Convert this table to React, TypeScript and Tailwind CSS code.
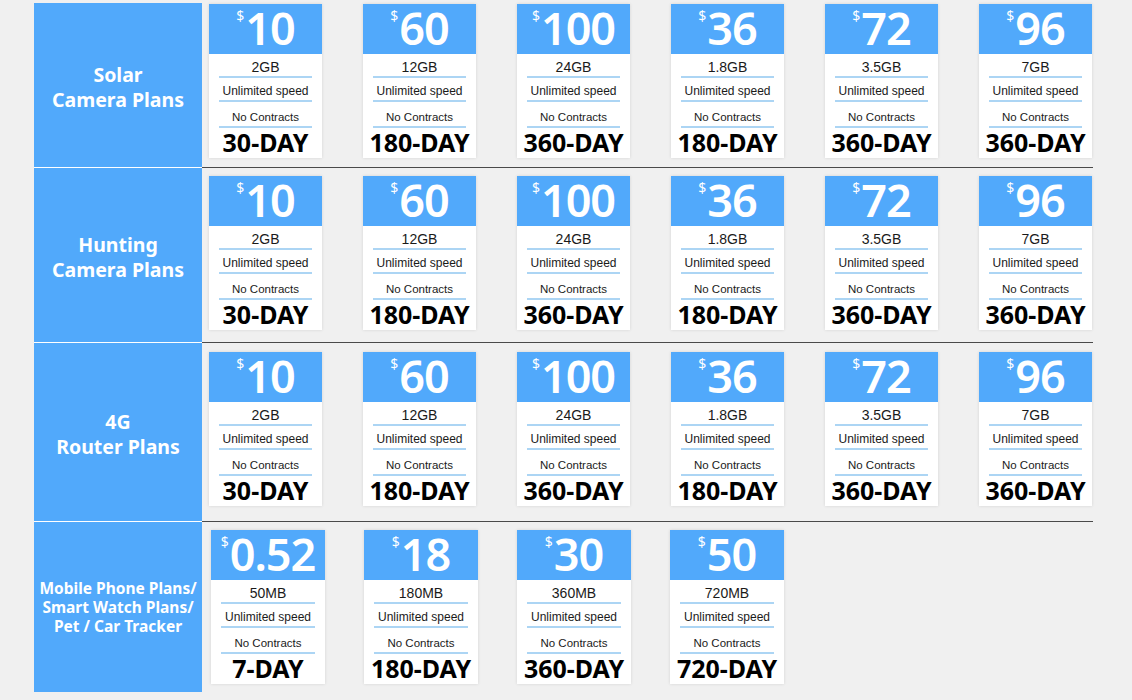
import React from "react";

type Plan = { price: string; data: string; days: string };

const std: Plan[] = [
  { price: "10", data: "2GB", days: "30-DAY" },
  { price: "60", data: "12GB", days: "180-DAY" },
  { price: "100", data: "24GB", days: "360-DAY" },
  { price: "36", data: "1.8GB", days: "180-DAY" },
  { price: "72", data: "3.5GB", days: "360-DAY" },
  { price: "96", data: "7GB", days: "360-DAY" },
];

const mobile: Plan[] = [
  { price: "0.52", data: "50MB", days: "7-DAY" },
  { price: "18", data: "180MB", days: "180-DAY" },
  { price: "30", data: "360MB", days: "360-DAY" },
  { price: "50", data: "720MB", days: "720-DAY" },
];

const small = { fontFamily: '"Liberation Sans", Arial, sans-serif' };
const noto = { fontFamily: '"Noto Sans", "Open Sans", sans-serif' };

const Card = ({ plan, wide }: { plan: Plan; wide?: boolean }) => {
  return (
    <div
      className={`${wide ? "w-[114px]" : "w-[113px]"} shrink-0 bg-white shadow-[0_0_3px_rgba(0,0,0,0.12)]`}
    >
      <div className="h-[50px] bg-[#51a9fb] flex justify-center items-start text-white" style={noto}>
        <span className="text-[14px] leading-[16px] mt-[4px] mr-[1px]">$</span>
        <span className="text-[45px] leading-[47px] font-semibold tracking-[-1px]">{plan.price}</span>
      </div>
      <div className="h-[22px] flex items-end justify-center text-[14px] leading-[18px] text-[#1a1a1a]" style={small}>
        {plan.data}
      </div>
      <div className="mx-[10px] border-b-2 border-[#acd5f4]" />
      <div className="h-[22px] flex items-end justify-center text-[12px] leading-[18px] text-[#1a1a1a]" style={small}>
        Unlimited speed
      </div>
      <div className="mx-[10px] border-b-2 border-[#acd5f4]" />
      <div className="h-[24px] flex items-end justify-center text-[11.5px] leading-[18px] text-[#1a1a1a]" style={small}>
        No Contracts
      </div>
      <div className="mx-[10px] border-b-2 border-[#acd5f4]" />
      <div className="h-[30px] flex items-start justify-center text-[25px] leading-[28px] font-bold text-black" style={noto}>
        {plan.days}
      </div>
    </div>
  );
};

const Row = ({
  label,
  plans,
  height,
  top,
  last,
  small: smallLabel,
}: {
  label: React.ReactNode;
  plans: Plan[];
  height: string;
  top: string;
  last?: boolean;
  small?: boolean;
}) => {
  return (
    <div className={`flex ${height}`}>
      <div
        className={`w-[168px] shrink-0 bg-[#51a9fb] flex items-center justify-center text-center text-white font-bold ${
          smallLabel ? "text-[15.5px] leading-[19px]" : "text-[19.5px] leading-[25px]"
        } ${last ? "" : "border-b border-white"}`}
        style={noto}
      >
        <div className={smallLabel ? "" : "mt-[3px]"}>{label}</div>
      </div>
      <div className={`flex-1 ${last ? "" : "border-b border-[#4a4a4a]"}`}>
        <div className={`flex ${top} ${smallLabel ? "pl-[9px] gap-[39px]" : "pl-[7px] gap-[41px]"}`}>
          {plans.map((p, i) => (
            <Card key={i} plan={p} wide={smallLabel} />
          ))}
        </div>
      </div>
    </div>
  );
};

export default function App() {
  return (
    <div className="w-[1132px] h-[700px] bg-[#f0f0f0] pt-[3px] pl-[34px] overflow-hidden">
      <div className="w-[1059px]">
        <Row
          label={<>Solar<br />Camera Plans</>}
          plans={std}
          height="h-[165px]"
          top="pt-[1px]"
        />
        <Row
          label={<>Hunting<br />Camera Plans</>}
          plans={std}
          height="h-[175px]"
          top="pt-[8px]"
        />
        <Row
          label={<>4G<br />Router Plans</>}
          plans={std}
          height="h-[179px]"
          top="pt-[9px]"
        />
        <Row
          label={<>Mobile Phone Plans/<br />Smart Watch Plans/<br />Pet / Car Tracker</>}
          plans={mobile}
          height="h-[170px]"
          top="pt-[8px]"
          last
          small
        />
      </div>
    </div>
  );
}
